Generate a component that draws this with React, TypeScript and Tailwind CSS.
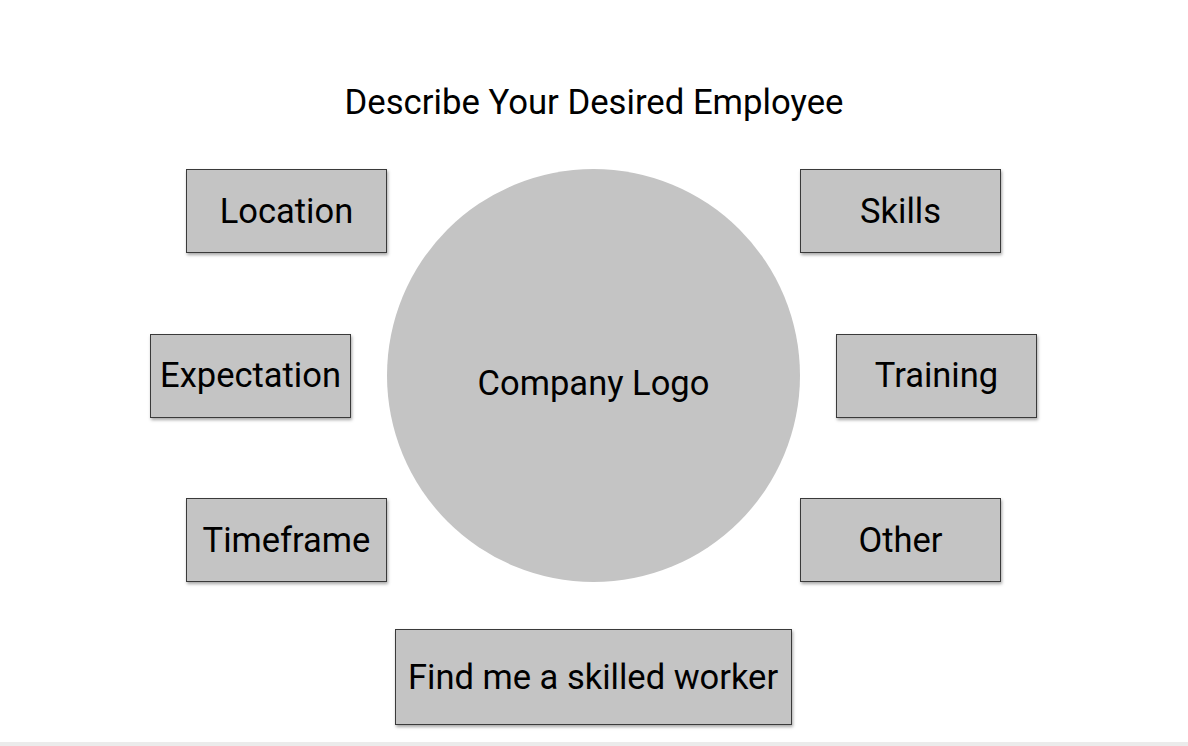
import type { ReactNode } from 'react';

function Tile({ children, className = '' }: { children: ReactNode; className?: string }) {
  return (
    <button
      type="button"
      className={`flex h-[84px] w-[201px] items-center justify-center border border-[#3a3a3a] bg-[#c4c4c4] text-[34.5px] leading-none text-black shadow-[1px_2px_3px_rgba(0,0,0,0.35)] ${className}`}
    >
      {children}
    </button>
  );
}

export default function App() {
  return (
    <main className="flex h-[746px] w-full flex-col bg-white font-['Roboto',sans-serif] text-black">
      <div className="flex flex-1 flex-col items-center">
        <h1 className="mt-[82px] text-[34.7px] leading-[40px] font-normal">Describe Your Desired Employee</h1>

        <div className="mt-[47px] mr-[2px] flex">
          <div className="flex h-[413px] w-[238px] flex-col items-end justify-between">
            <Tile>Location</Tile>
            <Tile className="mr-[36px]">Expectation</Tile>
            <Tile>Timeframe</Tile>
          </div>

          <div className="flex h-[413px] w-[413px] items-center justify-center rounded-full bg-[#c4c4c4] pt-[17px] text-[34.5px]">
            Company Logo
          </div>

          <div className="flex h-[413px] w-[237px] flex-col items-start justify-between">
            <Tile>Skills</Tile>
            <Tile className="ml-[36px]">Training</Tile>
            <Tile>Other</Tile>
          </div>
        </div>

        <button
          type="button"
          className="mt-[47px] mr-[2px] flex h-[96px] w-[397px] items-center justify-center border border-[#3a3a3a] bg-[#c4c4c4] text-[34.5px] leading-none shadow-[1px_2px_3px_rgba(0,0,0,0.35)]"
        >
          Find me a skilled worker
        </button>
      </div>
      <div className="h-[4px] w-full bg-[#ebebeb]" />
    </main>
  );
}
